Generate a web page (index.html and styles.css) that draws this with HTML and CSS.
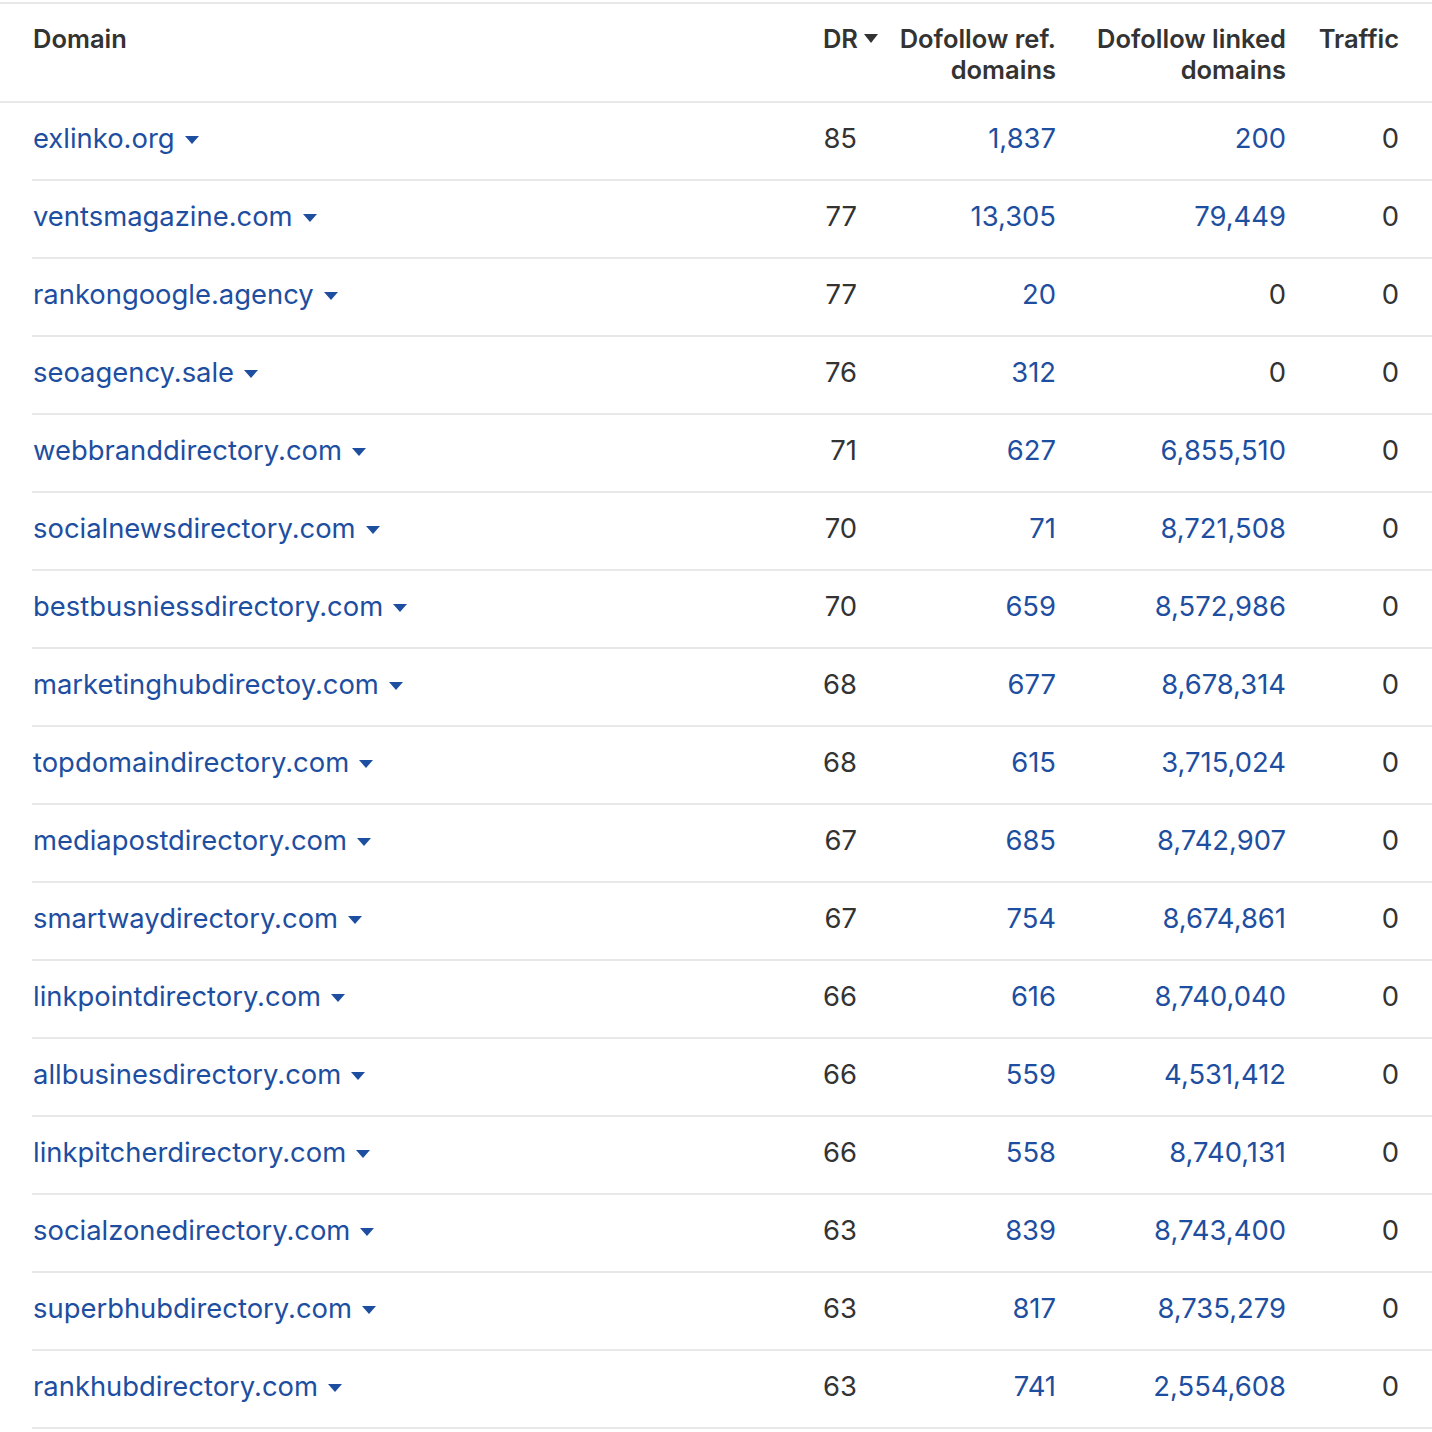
FILE: index.html
```html
<!DOCTYPE html>
<html>
<head>
<meta charset="utf-8">
<link rel="stylesheet" href="styles.css">
</head>
<body>
<div class="table">
  <div class="head">
    <div class="c hdomain">Domain</div>
    <div class="c num dr"><span class="drlabel">DR<span class="harrow"></span></span></div>
    <div class="c num">Dofollow ref.<br>domains</div>
    <div class="c num">Dofollow linked<br>domains</div>
    <div class="c num last">Traffic</div>
  </div>
  <div class="row"><div class="c domain"><a>exlinko.org</a><span class="arrow"></span></div><div class="c num">85</div><div class="c num link">1,837</div><div class="c num link">200</div><div class="c num last">0</div></div>
  <div class="row"><div class="c domain"><a>ventsmagazine.com</a><span class="arrow"></span></div><div class="c num">77</div><div class="c num link">13,305</div><div class="c num link">79,449</div><div class="c num last">0</div></div>
  <div class="row"><div class="c domain"><a>rankongoogle.agency</a><span class="arrow"></span></div><div class="c num">77</div><div class="c num link">20</div><div class="c num">0</div><div class="c num last">0</div></div>
  <div class="row"><div class="c domain"><a>seoagency.sale</a><span class="arrow"></span></div><div class="c num">76</div><div class="c num link">312</div><div class="c num">0</div><div class="c num last">0</div></div>
  <div class="row"><div class="c domain"><a>webbranddirectory.com</a><span class="arrow"></span></div><div class="c num">71</div><div class="c num link">627</div><div class="c num link">6,855,510</div><div class="c num last">0</div></div>
  <div class="row"><div class="c domain"><a>socialnewsdirectory.com</a><span class="arrow"></span></div><div class="c num">70</div><div class="c num link">71</div><div class="c num link">8,721,508</div><div class="c num last">0</div></div>
  <div class="row"><div class="c domain"><a>bestbusniessdirectory.com</a><span class="arrow"></span></div><div class="c num">70</div><div class="c num link">659</div><div class="c num link">8,572,986</div><div class="c num last">0</div></div>
  <div class="row"><div class="c domain"><a>marketinghubdirectoy.com</a><span class="arrow"></span></div><div class="c num">68</div><div class="c num link">677</div><div class="c num link">8,678,314</div><div class="c num last">0</div></div>
  <div class="row"><div class="c domain"><a>topdomaindirectory.com</a><span class="arrow"></span></div><div class="c num">68</div><div class="c num link">615</div><div class="c num link">3,715,024</div><div class="c num last">0</div></div>
  <div class="row"><div class="c domain"><a>mediapostdirectory.com</a><span class="arrow"></span></div><div class="c num">67</div><div class="c num link">685</div><div class="c num link">8,742,907</div><div class="c num last">0</div></div>
  <div class="row"><div class="c domain"><a>smartwaydirectory.com</a><span class="arrow"></span></div><div class="c num">67</div><div class="c num link">754</div><div class="c num link">8,674,861</div><div class="c num last">0</div></div>
  <div class="row"><div class="c domain"><a>linkpointdirectory.com</a><span class="arrow"></span></div><div class="c num">66</div><div class="c num link">616</div><div class="c num link">8,740,040</div><div class="c num last">0</div></div>
  <div class="row"><div class="c domain"><a>allbusinesdirectory.com</a><span class="arrow"></span></div><div class="c num">66</div><div class="c num link">559</div><div class="c num link">4,531,412</div><div class="c num last">0</div></div>
  <div class="row"><div class="c domain"><a>linkpitcherdirectory.com</a><span class="arrow"></span></div><div class="c num">66</div><div class="c num link">558</div><div class="c num link">8,740,131</div><div class="c num last">0</div></div>
  <div class="row"><div class="c domain"><a>socialzonedirectory.com</a><span class="arrow"></span></div><div class="c num">63</div><div class="c num link">839</div><div class="c num link">8,743,400</div><div class="c num last">0</div></div>
  <div class="row"><div class="c domain"><a>superbhubdirectory.com</a><span class="arrow"></span></div><div class="c num">63</div><div class="c num link">817</div><div class="c num link">8,735,279</div><div class="c num last">0</div></div>
  <div class="row"><div class="c domain"><a>rankhubdirectory.com</a><span class="arrow"></span></div><div class="c num">63</div><div class="c num link">741</div><div class="c num link">2,554,608</div><div class="c num last">0</div></div>
</div>
</body>
</html>
```
FILE: styles.css
```css
html, body {
  margin: 0;
  padding: 0;
  background: #fff;
}
body {
  font-family: Inter, "Noto Sans", sans-serif;
  color: #333;
  padding-top: 2px;
}
.table {
  width: 1432px;
}
.head {
  display: grid;
  grid-template-columns: 1fr 80px 199px 230px 146px;
  align-items: start;
  border-top: 2px solid #e8e8e8;
  border-bottom: 2px solid #e8e8e8;
  padding-left: 32px;
  height: 97px;
  font-size: 25.5px;
  font-weight: 600;
  line-height: 31px;
  color: #333;
}
.head .c {
  padding-top: 19px;
}
.hdomain {
  padding-left: 1px;
}
.row {
  display: grid;
  grid-template-columns: 1fr 80px 199px 230px 146px;
  margin-left: 32px;
  height: 76px;
  box-sizing: content-box;
  border-bottom: 2px solid #e8e8e8;
  align-items: center;
  font-size: 27.4px;
  line-height: 36px;
}
.row .c {
  padding-bottom: 6px;
}
.c {
  white-space: nowrap;
}
.domain {
  padding-left: 1px;
  display: flex;
  align-items: center;
}
.domain a {
  color: #1d4ea0;
  text-decoration: none;
}
.arrow {
  display: inline-block;
  width: 0;
  height: 0;
  border-left: 7px solid transparent;
  border-right: 7px solid transparent;
  border-top: 8px solid #1d4ea0;
  margin-left: 10px;
  margin-top: 3px;
}
.num {
  text-align: right;
}
.link {
  color: #1d4ea0;
}
.last {
  padding-right: 33px;
}
.drlabel {
  display: inline-flex;
  align-items: center;
  margin-right: -21px;
}
.harrow {
  display: inline-block;
  width: 0;
  height: 0;
  border-left: 7px solid transparent;
  border-right: 7px solid transparent;
  border-top: 9px solid #333;
  margin-left: 6px;
}
```
